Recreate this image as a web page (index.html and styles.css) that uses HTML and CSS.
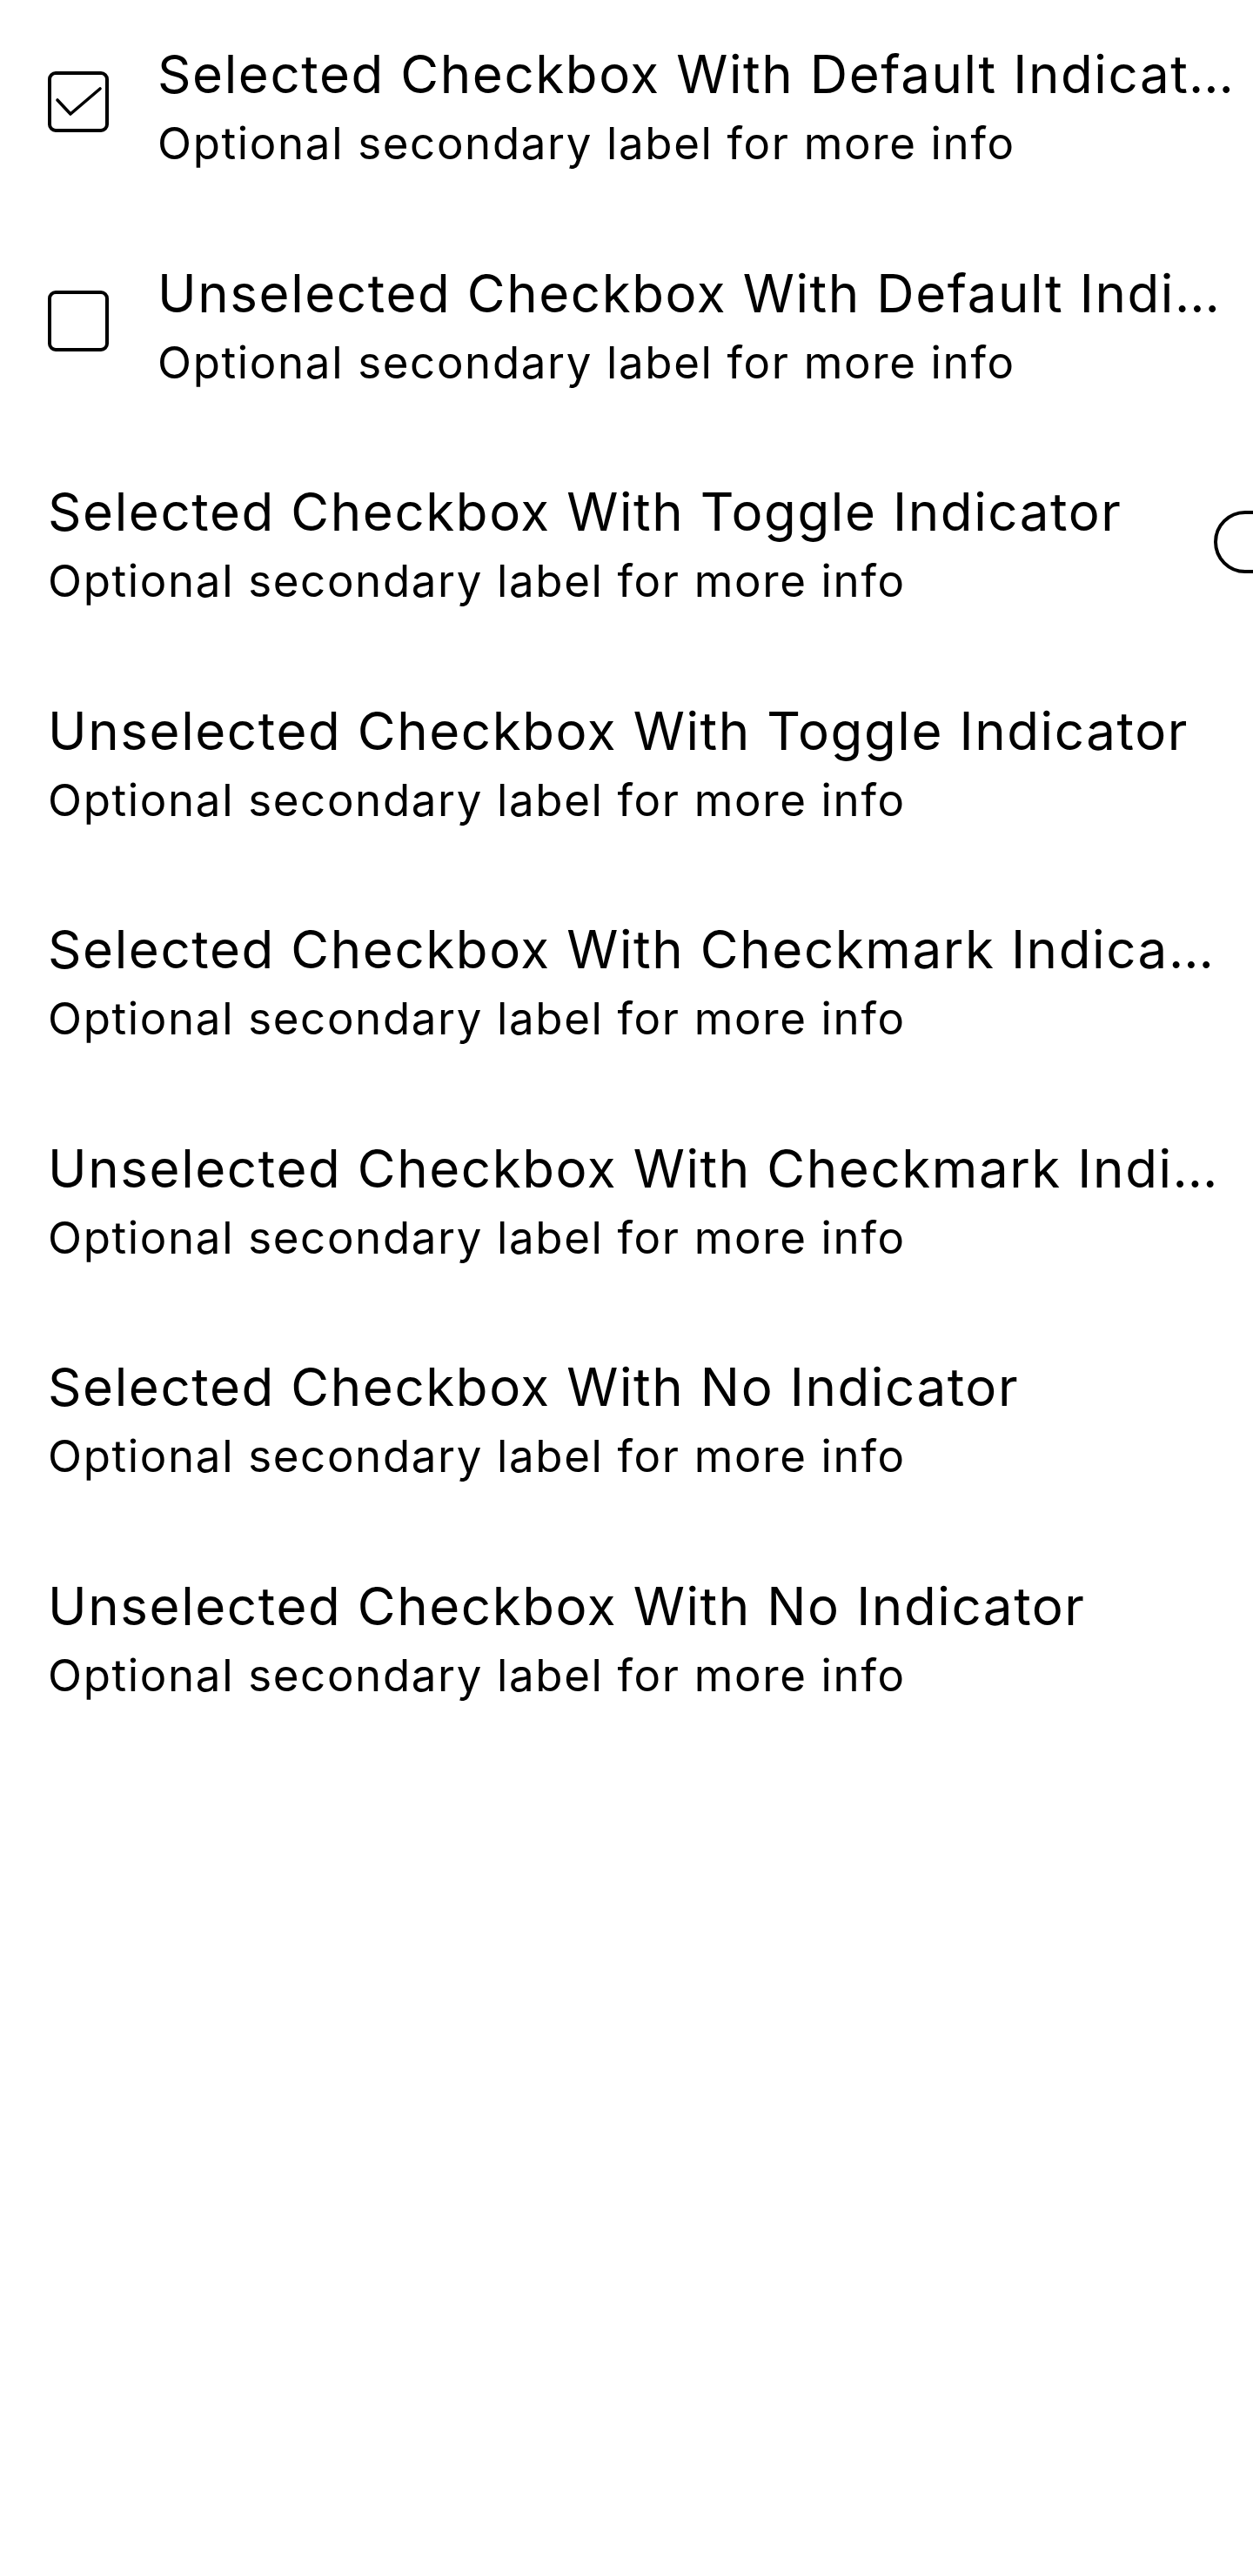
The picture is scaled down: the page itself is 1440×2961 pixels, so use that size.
FILE: index.html
```html
<!DOCTYPE html>
<html lang="en">
<head>
<meta charset="utf-8">
<title>Checkbox list</title>
<link rel="stylesheet" href="styles.css">
</head>
<body>
<ul class="list">
  <li class="row">
    <span class="lead">
      <svg class="box" viewBox="0 0 70 70" width="70" height="70" aria-hidden="true">
        <rect x="2" y="2" width="66" height="66" rx="7" ry="7" fill="none" stroke="#000" stroke-width="4"/>
        <polyline points="11,33 26,49 60,20" fill="none" stroke="#000" stroke-width="3.6" stroke-linecap="round" stroke-linejoin="round"/>
      </svg>
    </span>
    <span class="text with-lead">
      <span class="title">Selected Checkbox With Default Indicator</span>
      <span class="sub">Optional secondary label for more info</span>
    </span>
  </li>
  <li class="row">
    <span class="lead">
      <svg class="box" viewBox="0 0 70 70" width="70" height="70" aria-hidden="true">
        <rect x="2" y="2" width="66" height="66" rx="7" ry="7" fill="none" stroke="#000" stroke-width="4"/>
      </svg>
    </span>
    <span class="text with-lead">
      <span class="title">Unselected Checkbox With Default Indicator</span>
      <span class="sub">Optional secondary label for more info</span>
    </span>
  </li>
  <li class="row">
    <span class="text">
      <span class="title">Selected Checkbox With Toggle Indicator</span>
      <span class="sub">Optional secondary label for more info</span>
    </span>
    <span class="trail"><span class="toggle"></span></span>
  </li>
  <li class="row">
    <span class="text">
      <span class="title">Unselected Checkbox With Toggle Indicator</span>
      <span class="sub">Optional secondary label for more info</span>
    </span>
    <span class="trail"><span class="toggle"></span></span>
  </li>
  <li class="row">
    <span class="text">
      <span class="title">Selected Checkbox With Checkmark Indicator</span>
      <span class="sub">Optional secondary label for more info</span>
    </span>
  </li>
  <li class="row">
    <span class="text">
      <span class="title">Unselected Checkbox With Checkmark Indicator</span>
      <span class="sub">Optional secondary label for more info</span>
    </span>
  </li>
  <li class="row">
    <span class="text">
      <span class="title">Selected Checkbox With No Indicator</span>
      <span class="sub">Optional secondary label for more info</span>
    </span>
  </li>
  <li class="row">
    <span class="text">
      <span class="title">Unselected Checkbox With No Indicator</span>
      <span class="sub">Optional secondary label for more info</span>
    </span>
  </li>
</ul>
</body>
</html>
```
FILE: styles.css
```css
html, body {
  margin: 0;
  padding: 0;
  background: #fff;
}
body {
  font-family: Inter, "Noto Sans", sans-serif;
  color: #000;
  overflow: hidden;
  min-height: 2961px;
}
.list {
  list-style: none;
  margin: 0;
  padding: 0;
}
.row {
  display: flex;
  align-items: center;
  padding: 43px 0 49.5px 55px;
  width: 1440px;
  box-sizing: border-box;
}
.lead {
  flex: 0 0 auto;
  width: 70px;
  height: 70px;
  margin-right: 56px;
  align-self: flex-start;
  margin-top: 39px;
}
.box {
  display: block;
}
.text {
  flex: 0 0 auto;
  display: flex;
  flex-direction: column;
  min-width: 0;
  max-width: 1345px;
}
.text.with-lead {
  max-width: 1240px;
}
.title,
.sub {
  display: block;
  white-space: nowrap;
  overflow: hidden;
  text-overflow: ellipsis;
}
.title {
  font-size: 60px;
  line-height: 84px;
  letter-spacing: 1.6px;
}
.sub {
  font-size: 51px;
  line-height: 75px;
  letter-spacing: 1.65px;
}
.trail {
  flex: 0 0 auto;
  margin-left: 106px;
  margin-top: -5px;
}
.toggle {
  display: block;
  width: 124px;
  height: 72px;
  box-sizing: border-box;
  border: 4px solid #000;
  border-radius: 36px;
}
```
